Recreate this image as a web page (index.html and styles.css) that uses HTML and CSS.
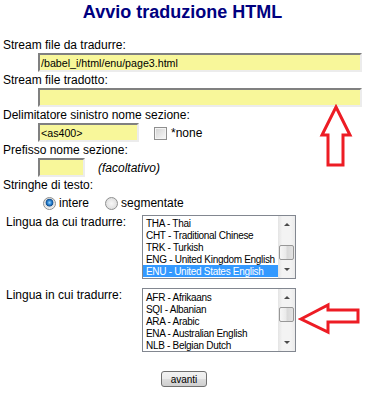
FILE: index.html
```html
<!DOCTYPE html>
<html lang="it">
<head>
    <meta charset="UTF-8">
    <title>Avvio traduzione HTML</title>
    <link rel="stylesheet" href="styles.css">
</head>
<body>
    <h1 class="title">Avvio traduzione HTML</h1>
    <form class="form">
        <div class="label">Stream file da tradurre:</div>
        <div class="line"><input class="field wide" type="text" value="/babel_i/html/enu/page3.html"></div>
        <div class="label">Stream file tradotto:</div>
        <div class="line"><input class="field wide" type="text"></div>
        <div class="label">Delimitatore sinistro nome sezione:</div>
        <div class="line">
            <input class="field short" type="text" value="&lt;as400&gt;">
            <label class="check-label"><input class="check" type="checkbox">*none</label>
        </div>
        <div class="label">Prefisso nome sezione:</div>
        <div class="line">
            <input class="field tiny" type="text">
            <em class="note">(facoltativo)</em>
        </div>
        <div class="label">Stringhe di testo:</div>
        <div class="radios">
            <label class="radio-label"><input class="radio" type="radio" name="stringhe" checked>intere</label>
            <label class="radio-label"><input class="radio" type="radio" name="stringhe">segmentate</label>
        </div>
        <div class="langs">
            <div class="label">Lingua da cui tradurre:</div>
            <div class="listbox">
                <div class="options">
                    <div class="opt">THA - Thai</div>
                    <div class="opt">CHT - Traditional Chinese</div>
                    <div class="opt">TRK - Turkish</div>
                    <div class="opt">ENG - United Kingdom English</div>
                    <div class="opt selected">ENU - United States English</div>
                </div>
                <div class="scrollbar">
                    <span class="sb-btn sb-up"></span>
                    <span class="sb-track"><span class="thumb at-end"></span></span>
                    <span class="sb-btn sb-down"></span>
                </div>
            </div>
            <div class="label">Lingua in cui tradurre:</div>
            <div class="listbox">
                <div class="options top">
                    <div class="opt">AFR - Afrikaans</div>
                    <div class="opt">SQI - Albanian</div>
                    <div class="opt">ARA - Arabic</div>
                    <div class="opt">ENA - Australian English</div>
                    <div class="opt">NLB - Belgian Dutch</div>
                </div>
                <div class="scrollbar">
                    <span class="sb-btn sb-up"></span>
                    <span class="sb-track"><span class="thumb"></span></span>
                    <span class="sb-btn sb-down"></span>
                </div>
            </div>
        </div>
        <div class="actions"><button class="btn" type="button">avanti</button></div>
    </form>

    <!-- frecce rosse di annotazione -->
    <svg class="mark mark-up" width="36" height="64" viewBox="0 0 36 64">
        <polygon points="18,3 32,31 25,31 25,61 10,61 10,31 4,31" />
    </svg>
    <svg class="mark mark-left" width="64" height="34" viewBox="0 0 64 34">
        <polygon points="3,17 30,3 30,8 60,8 60,20 30,20 30,30" />
    </svg>
</body>
</html>
```

FILE: styles.css
```css
body {
    position: relative;
    margin: 0;
    padding: 0 3px;
    font-family: "Liberation Sans", Arial, sans-serif;
    font-size: 12px;
    color: #000;
    background: #fff;
}
.title {
    margin: 0 0 15px;
    padding-top: 1px;
    font-size: 18px;
    line-height: 22px;
    text-align: center;
    color: #000080;
}
.label {
    line-height: 15px;
}
.line {
    display: flex;
    align-items: center;
    height: 19px;
    margin: 0 0 1px 35px;
}
.field {
    box-sizing: border-box;
    height: 19px;
    margin: 0;
    padding: 0 1px;
    border-style: solid;
    border-width: 2px;
    border-color: #808080 #ececec #ececec #808080;
    background: #f8f79a;
    font: 8pt "Liberation Sans", Arial, sans-serif;
    color: #000;
    outline: none;
}
.wide { width: 324px; }
.short { width: 101px; }
.tiny { width: 47px; }

.check-label {
    display: flex;
    align-items: center;
    margin-left: 15px;
}
.check {
    -webkit-appearance: none;
    appearance: none;
    width: 13px;
    height: 13px;
    margin: 1px 4px 0 0;
    border: 1px solid #8f8f8f;
    box-shadow: inset 0 0 0 1px #f4f4f4;
    background: linear-gradient(135deg, #d2d2d2, #f9f9f9);
}
.note {
    margin-left: 13px;
}

.radios {
    display: flex;
    align-items: center;
    height: 20px;
    padding-left: 40px;
}
.radio-label {
    display: flex;
    align-items: center;
    margin-right: 16px;
}
.radio {
    -webkit-appearance: none;
    appearance: none;
    width: 13px;
    height: 13px;
    margin: 0 3px 0 0;
    border: 1px solid #8e8f8f;
    border-radius: 50%;
    background: radial-gradient(circle at 50% 50%, #f7f7f7 0, #dedede 6px);
}
.radio:checked {
    background: radial-gradient(circle at 50% 42%, #9ad8ff 0, #2f86d4 2px, #0f4f92 3.5px, #dadada 4.2px, #f4f4f4 6px);
}

.langs {
    display: grid;
    grid-template-columns: 136px 154px;
    row-gap: 9px;
    margin-top: 2px;
    padding-left: 3px;
}
.listbox {
    display: flex;
    box-sizing: border-box;
    width: 154px;
    height: 64px;
    border: 1px solid #828790;
    background: #fff;
}
.options {
    flex: 1;
    overflow: hidden;
    padding-top: 1px;
    font: 10px "Liberation Sans", Arial, sans-serif;
    letter-spacing: -0.3px;
}
.options.top {
    padding-top: 2px;
}
.opt {
    height: 12px;
    line-height: 14px;
    padding-left: 3px;
    white-space: nowrap;
}
.opt.selected {
    background: #3399ff;
    color: #fff;
}
.scrollbar {
    display: flex;
    flex-direction: column;
    width: 17px;
    background: linear-gradient(to right, #e4e4e4, #f3f3f3 25%, #f3f3f3 75%, #ebebeb);
}
.sb-btn {
    display: flex;
    align-items: center;
    justify-content: center;
    height: 17px;
}
.sb-btn::before {
    content: "";
    border-left: 3px solid transparent;
    border-right: 3px solid transparent;
}
.sb-up::before { border-bottom: 3px solid #4a4a4a; }
.sb-down::before { border-top: 3px solid #4a4a4a; }
.sb-track {
    flex: 1;
}
.thumb {
    display: block;
    box-sizing: border-box;
    height: 15px;
    margin: 1px 1px 0;
    border: 1px solid #979797;
    border-radius: 2px;
    background: linear-gradient(to right, #f6f6f6, #eaeaea 45%, #d9d9d9 55%, #e3e3e3);
}
.thumb.at-end {
    margin-top: 12px;
}

.actions {
    margin-top: 19px;
    padding-left: 3px;
    text-align: center;
}
.btn {
    width: 46px;
    height: 16px;
    padding: 0;
    border: 1px solid #707070;
    border-radius: 3px;
    background: linear-gradient(#f2f2f2, #ebebeb 50%, #dddddd 50%, #cfcfcf);
    font: 10px "Liberation Sans", Arial, sans-serif;
    color: #000;
}

.mark {
    position: absolute;
}
.mark polygon {
    fill: none;
    stroke: #ed1c24;
    stroke-width: 3;
}
.mark-up {
    left: 318px;
    top: 104px;
}
.mark-left {
    left: 298px;
    top: 302px;
}
```
